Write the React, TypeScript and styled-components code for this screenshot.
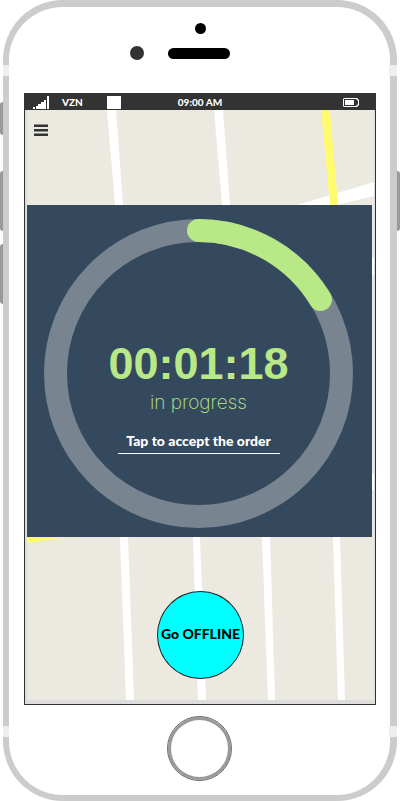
import React from "react";
import styled, { createGlobalStyle } from "styled-components";

const GlobalStyle = createGlobalStyle`
  *, *::before, *::after { box-sizing: border-box; }
  body { margin: 0; background: #fff; }
  button { font: inherit; padding: 0; cursor: pointer; }
  svg { display: block; }
`;

const uiFont = `Lato, "Noto Sans", sans-serif`;

const Page = styled.div`
  display: grid;
  grid-template-columns: 3px minmax(0, 1fr) 3px;
  min-height: 100vh;
  font-family: ${uiFont};
`;

const Rail = styled.div<{ $top: number }>`
  display: flex;
  flex-direction: column;
  padding-top: ${(p) => p.$top}px;
`;

const SideKey = styled.span<{ $side: "left" | "right"; $height: number; $gap?: number }>`
  height: ${(p) => p.$height}px;
  margin-bottom: ${(p) => p.$gap ?? 0}px;
  background: #999;
  border-radius: ${(p) => (p.$side === "left" ? "3px 0 0 3px" : "0 3px 3px 0")};
`;

const Device = styled.main`
  position: relative;
  display: flex;
  flex-direction: column;
  border: solid #ccc;
  border-width: 7px 7px 6px 6px;
  border-radius: 60px;
  background: #fff;
`;

const AntennaBand = styled.span<{ $edge: "top" | "bottom"; $side: "left" | "right" }>`
  position: absolute;
  ${(p) => p.$edge}: 58px;
  ${(p) => p.$side}: ${(p) => (p.$side === "left" ? -6 : -7)}px;
  width: ${(p) => (p.$side === "left" ? 6 : 8)}px;
  height: 11px;
  background: #eee;
`;

const Bezel = styled.header`
  display: flex;
  justify-content: center;
  height: 86px;
`;

const Screen = styled.section`
  flex: 1;
  display: flex;
  flex-direction: column;
  margin: 0 14px 0 15px;
  border: 1px solid #333;
  background: #ddd;
`;

const StatusBar = styled.div`
  display: grid;
  grid-template-columns: 1fr auto 1fr;
  align-items: center;
  height: 16px;
  padding: 0 8px;
  background: #333;
  color: #fff;
  font-size: 10px;
  line-height: 16px;
  font-weight: 900;
`;

const StatusGroup = styled.div`
  display: flex;
  align-items: center;
  gap: 13px;
`;

const StatusEnd = styled.div`
  display: flex;
  justify-content: flex-end;
  padding-right: 8px;
`;

const Carrier = styled.span`
  width: 32px;
`;

const WifiBox = styled.span`
  width: 14px;
  height: 13px;
  background: #fff;
`;

const MapArea = styled.div`
  flex: 1;
  position: relative;
  display: flex;
  flex-direction: column;
  margin: 0 1px 4px 2px;
  background: #ece9e1;
`;

const MapDrawing = styled.svg`
  position: absolute;
  inset: 0;
  width: 100%;
  height: 100%;
`;

const TopBar = styled.nav`
  position: relative;
  height: 95px;
  padding: 14px 7px;
`;

const MenuButton = styled.button`
  display: block;
  border: 0;
  background: none;
`;

const Panel = styled.section`
  position: relative;
  display: grid;
  margin-right: 2px;
  padding: 14px 19px 9px 17px;
  background: #34495e;
`;

const Dial = styled.svg`
  grid-area: 1 / 1;
  width: 100%;
  height: auto;
`;

const DialContent = styled.div`
  grid-area: 1 / 1;
  display: flex;
  flex-direction: column;
  align-items: center;
  padding-top: 119px;
  color: #b8e986;
`;

const Timer = styled.time`
  font: 700 45px/52px "Liberation Sans", Arial, sans-serif;
`;

const Progress = styled.p`
  margin: 0;
  font: 200 19px/26px Inter, Roboto, sans-serif;
`;

const AcceptButton = styled.button`
  width: 162px;
  height: 26px;
  margin-top: 12px;
  border: 0;
  border-bottom: 1px solid #fff;
  background: none;
  color: #fff;
  font-size: 14px;
  line-height: 24px;
  font-weight: 900;
  white-space: nowrap;
`;

const Actions = styled.div`
  position: relative;
  display: flex;
  justify-content: center;
  padding-top: 54px;
`;

const OfflineButton = styled.button`
  width: 87px;
  height: 88px;
  padding-bottom: 3px;
  border: 1px solid #222;
  border-radius: 50%;
  background: #0ff;
  color: #000;
  font-size: 14px;
  font-weight: 900;
  white-space: nowrap;
`;

const Chin = styled.footer`
  display: flex;
  justify-content: center;
  padding: 11px 1px 14px 0;
`;

const HomeButton = styled.button`
  width: 65px;
  height: 65px;
  border: 1px solid #666;
  border-radius: 50%;
  background: #fff;
  box-shadow: inset 0 0 0 3px #999;
`;

function StreetMap() {
  return (
    <MapDrawing viewBox="0 0 347 590" preserveAspectRatio="none" aria-hidden="true">
      <g fill="#fff">
        <path d="M80 0h9l7 95h-8z" />
        <path d="M187 0h9l7 95h-8z" />
        <path d="M270 95l77-23v14l-37 9z" />
        <path d="M345 148h2v17h-2z" />
        <path d="M345 364h2v16h-2z" />
        <path d="M93 427h8l6 163h-8z" />
        <path d="M166 427h7l6 163h-8z" />
        <path d="M235 427h8l5 163h-7z" />
        <path d="M306 427h7l5 163h-7z" />
      </g>
      <g fill="#fffa6e">
        <path d="M294 0h9l8 95h-8z" />
        <path d="M0 427h40l-40 6z" />
      </g>
    </MapDrawing>
  );
}

export default function App() {
  return (
    <>
      <GlobalStyle />
      <Page>
        <Rail $top={102}>
          <SideKey $side="left" $height={33} $gap={36} />
          <SideKey $side="left" $height={60} $gap={13} />
          <SideKey $side="left" $height={60} />
        </Rail>
        <Device>
          <AntennaBand $edge="top" $side="left" />
          <AntennaBand $edge="top" $side="right" />
          <AntennaBand $edge="bottom" $side="left" />
          <AntennaBand $edge="bottom" $side="right" />
          <Bezel>
            <svg width="139" height="60" viewBox="130 7 139 60" aria-hidden="true">
              <circle cx="200.5" cy="28.5" r="5.5" />
              <circle cx="137" cy="53" r="7" fill="#333" />
              <rect x="168" y="48" width="62" height="11" rx="5.5" />
            </svg>
          </Bezel>
          <Screen>
            <StatusBar>
              <StatusGroup>
                <svg width="16" height="13" viewBox="0 0 16 13" fill="#fff" role="img" aria-label="Signal">
                  <path d="M0 11h2v2H0zM3 10h2v3H3zM5 8h3v5H5zM8 6h3v7H8zM11 4h2v9h-2zM14 0h2v13h-2z" />
                </svg>
                <Carrier>VZN</Carrier>
                <WifiBox />
              </StatusGroup>
              <span>09:00 AM</span>
              <StatusEnd>
                <svg width="16" height="9" viewBox="0 0 16 9" role="img" aria-label="Battery">
                  <path d="M1 0h13l2 2v5l-2 2H1L0 8V1z" fill="#fff" />
                  <path d="M1 1h12l2 2v3l-2 2H1z" fill="#333" />
                  <path d="M2 2h9v5H2z" fill="#fff" />
                </svg>
              </StatusEnd>
            </StatusBar>
            <MapArea>
              <StreetMap />
              <TopBar>
                <MenuButton type="button" aria-label="Menu">
                  <svg width="14" height="12" viewBox="0 0 14 12" aria-hidden="true">
                    <path d="M0 0h14v1H0zM0 7h14v1H0zM0 9h14v1H0z" fill="#8f8d89" />
                    <path d="M0 1h14v2H0zM0 5h14v2H0zM0 10h14v2H0z" fill="#333" />
                  </svg>
                </MenuButton>
              </TopBar>
              <Panel>
                <Dial viewBox="0 0 309 309" fill="none" strokeWidth="23" aria-hidden="true">
                  <circle cx="154.5" cy="154.5" r="143" stroke="#78848f" />
                  <path d="M154.5 11.5A143 143 0 0 1 276.5 80.5" stroke="#b8e986" strokeLinecap="round" />
                </Dial>
                <DialContent>
                  <Timer>00:01:18</Timer>
                  <Progress>in progress</Progress>
                  <AcceptButton type="button">Tap to accept the order</AcceptButton>
                </DialContent>
              </Panel>
              <Actions>
                <OfflineButton type="button">Go OFFLINE</OfflineButton>
              </Actions>
            </MapArea>
          </Screen>
          <Chin>
            <HomeButton type="button" aria-label="Home" />
          </Chin>
        </Device>
        <Rail $top={171}>
          <SideKey $side="right" $height={60} />
        </Rail>
      </Page>
    </>
  );
}
